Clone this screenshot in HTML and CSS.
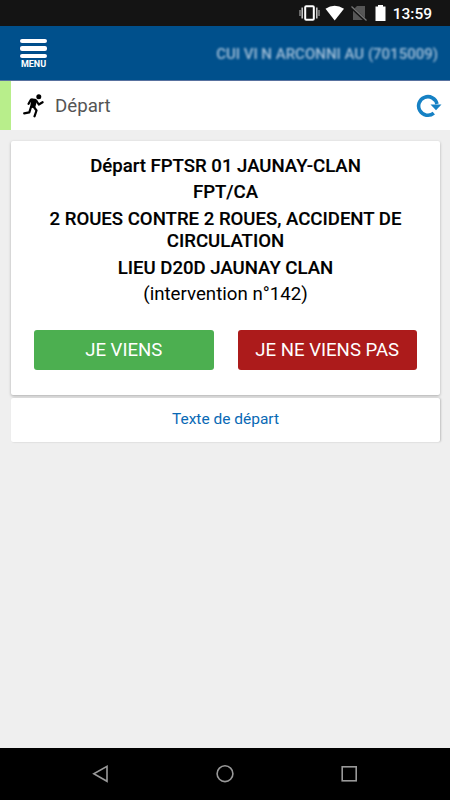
FILE: index.html
```html
<!DOCTYPE html>
<html lang="fr">
<head>
<meta charset="utf-8">
<title>Départ</title>
<link rel="stylesheet" href="styles.css">
</head>
<body>
<div class="status">
  <svg class="status-icons" width="90" height="26" viewBox="0 0 90 26">
    <g fill="none" stroke="#fff">
      <rect x="5.2" y="6.2" width="8.600" height="13.6" rx="1" stroke-width="2"/>
      <path d="M2.2 7.500v11M16.800 7.500v11" stroke="#ccc" stroke-width="1.500"/>
      <path d="M0 10v6M19 10v6" stroke="#999" stroke-width="1.300"/>
    </g>
    <path d="M25.500 8.800Q34.500 2.500 44 8.800L34.700 20.500Z" fill="#fff"/>
    <path d="M57 6h8v14h-12V10Z" fill="#565656"/>
    <path d="M51 7l15 14" stroke="#141414" stroke-width="3"/>
    <path d="M51.500 6.500l15 14" stroke="#777" stroke-width="1.300"/>
    <path d="M75.500 6.500h2.500V5h5v1.500h2.500V21h-10Z" fill="#fff"/>
  </svg>
  <span class="clock">13:59</span>
</div>
<header class="header">
  <div class="menu">
    <span class="bar"></span><span class="bar"></span><span class="bar"></span>
    <span class="menu-label">MENU</span>
  </div>
  <div class="user">CUI VI N ARCONNI AU (7015009)</div>
</header>
<div class="title-row">
  <svg class="runner" width="22" height="24" viewBox="0 0 22 24">
    <circle cx="15.800" cy="2.800" r="2.500"/>
    <path d="M5.600 9.800L8 5.600L12 5.800M10.500 12.500L13.500 16.500L11.500 22.300M8 13L6.300 18.300L1.200 19.300M13.500 7L15.800 10.500L19.600 8.200" fill="none" stroke="#000" stroke-width="2.200" stroke-linecap="round" stroke-linejoin="round"/>
    <path d="M8.500 4.500L14.300 5.800L12 14.300L7 13.500Z"/>
  </svg>
  <h1 class="title">Départ</h1>
  <svg class="refresh" width="26" height="24" viewBox="0 0 26 24">
    <path d="M17.800 19.200A9.300 9.300 0 1 1 21 10" fill="none" stroke="#1681c4" stroke-width="3.600"/>
    <path d="M14.500 10.500H25.500L20 16.300Z" fill="#1681c4"/>
  </svg>
</div>
<main class="content">
  <section class="card alert">
    <p class="line">Départ FPTSR 01 JAUNAY-CLAN</p>
    <p class="line">FPT/CA</p>
    <p class="line">2 ROUES CONTRE 2 ROUES, ACCIDENT DE<br>CIRCULATION</p>
    <p class="line">LIEU D20D JAUNAY CLAN</p>
    <p class="line number">(intervention n°142)</p>
    <div class="actions">
      <div class="button yes">JE VIENS</div>
      <div class="button no">JE NE VIENS PAS</div>
    </div>
  </section>
  <section class="card link">Texte de départ</section>
</main>
<nav class="nav">
  <svg width="450" height="52" viewBox="0 0 450 52" fill="none" stroke="#999" stroke-width="1.600">
    <path d="M107 18.300V33.300L93.800 25.800Z"/>
    <circle cx="225" cy="25.700" r="7.900"/>
    <rect x="342.200" y="18.800" width="14" height="14"/>
  </svg>
</nav>
</body>
</html>
```

FILE: styles.css
```css
* { box-sizing: border-box; }
body { margin: 0; height: 800px; display: flex; flex-direction: column; background: #efefef; font-family: Roboto, sans-serif; overflow: hidden; }
svg { display: block; }
.status { height: 26px; background: #141414; display: flex; justify-content: flex-end; align-items: center; padding-right: 18px; gap: 3px; flex: none; }
.status-icons { overflow: visible; }
.clock { color: #fff; font-size: 15.500px; font-weight: 500; line-height: 26px; padding-top: 2px; }
.header { height: 55px; flex: none; background: #00508c; border-bottom: 1px solid #58719f; display: flex; justify-content: space-between; align-items: flex-start; padding: 13px 12px 0 20px; }
.menu { width: 27px; display: flex; flex-direction: column; align-items: center; gap: 3px; }
.bar { width: 27px; height: 4.400px; border-radius: 2px; background: #fff; box-shadow: 0 0 1px #002d80; }
.menu-label { color: #fff; font-size: 9px; font-weight: 700; line-height: 10px; margin-top: -2px; }
.user { margin-top: 6px; color: #a3c0d9; font-size: 15px; line-height: 18px; font-weight: 500; white-space: nowrap; filter: blur(1px); }
.title-row { height: 49px; flex: none; background: #fff; border-left: 11px solid #b8ee8b; display: flex; align-items: center; padding: 0 8px 0 12px; }
.title { margin: 0 auto 0 10px; font-size: 18.700px; font-weight: 400; color: #555; }
.content { flex: 1; padding: 11px; display: flex; flex-direction: column; gap: 3px; }
.card { width: 429px; background: #fff; border-radius: 2px; box-shadow: 0 1px 3px rgba(0,0,0,.28); text-align: center; }
.alert { height: 253.500px; padding: 14px 23px 0; }
.line { margin: 0 0 4px; font-size: 18.580px; line-height: 22.400px; font-weight: 500; color: #000; -webkit-text-stroke: .15px #000; }
.number { font-size: 18.700px; -webkit-text-stroke: 0; font-weight: 400; }
.actions { display: flex; gap: 24px; margin-top: 25px; }
.button { flex: 1; height: 39.500px; border-radius: 3px; color: #fff; font-size: 18.580px; line-height: 40px; }
.yes { background: #4caf50; }
.no { background: #ac1b1b; }
.link { height: 44px; line-height: 43px; font-size: 15.500px; color: #0969b5; box-shadow: 1px 0 2px rgba(0,0,0,.2); }
.nav { height: 52px; flex: none; background: #000; }
```
